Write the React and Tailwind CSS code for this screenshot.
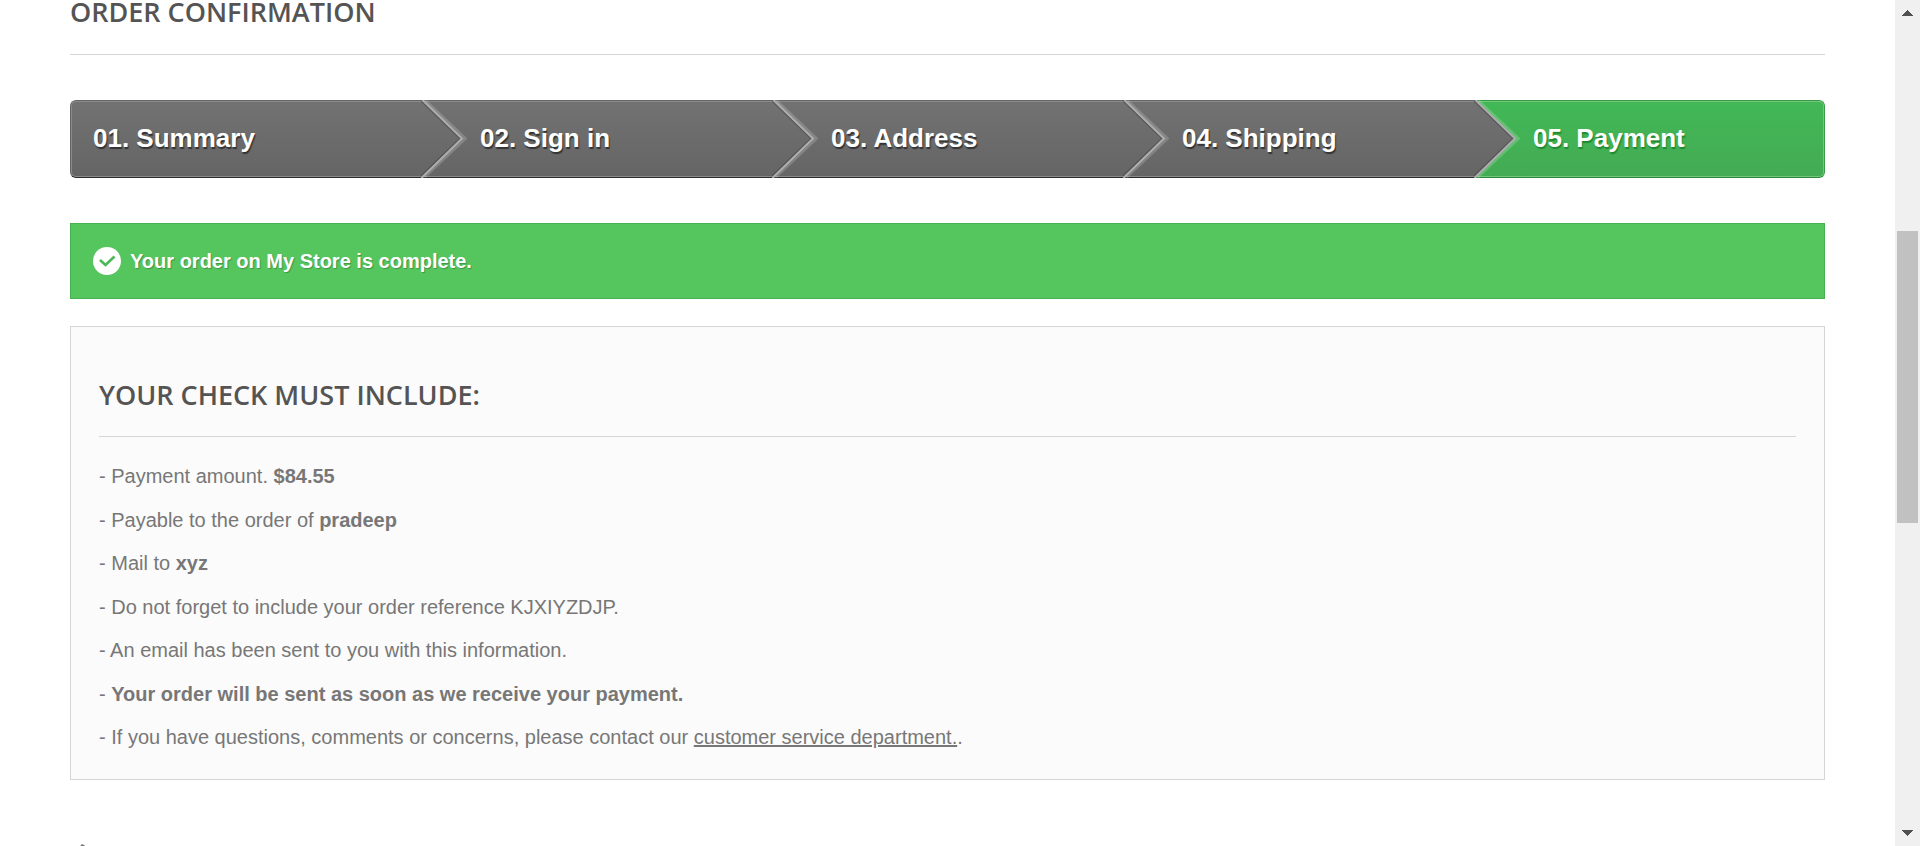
const STEPS = ["01. Summary", "02. Sign in", "03. Address", "04. Shipping", "05. Payment"];

function Chevron({ current }) {
  return (
    <svg aria-hidden="true" viewBox="0 0 46 78" className="absolute top-0 left-0 h-[78px] w-[46px]" fill="none">
      {current && (
        <>
          <defs>
            <linearGradient id="stepGrey" x1="0" y1="0" x2="0" y2="1">
              <stop offset="0" stopColor="#727272" />
              <stop offset="1" stopColor="#656565" />
            </linearGradient>
          </defs>
          <path d="M0 0H2L41 38.5L0 78Z" fill="url(#stepGrey)" />
        </>
      )}
      <path d="M4 1L43.500 38.500L3 77" stroke="#fff" strokeOpacity=".18" strokeWidth="4" />
      <path d="M-1 0L39 38.500L-1 77" stroke="#000" strokeOpacity=".2" strokeWidth="1.5" />
      <path d="M1.500 0L41 38.500L0.500 78" stroke="#adadad" strokeWidth="2" />
    </svg>
  );
}

function Step({ label, index }) {
  const first = index === 0;
  const current = index === STEPS.length - 1;
  return (
    <li
      aria-current={current ? "step" : undefined}
      className={
        "relative flex h-[78px] items-center border-y bg-linear-to-b pb-[2px] " +
        (first ? "rounded-l-md border-l pl-[22px] " : "pl-[59px] ") +
        (current
          ? "rounded-r-md border-r border-[#399b49] border-b-[#2c8540] from-[#42b856] to-[#43ab54]"
          : "border-[#666666] border-b-[#2b2b2b] from-[#727272] to-[#656565]")
      }
    >
      <span
        className={
          "pointer-events-none absolute inset-0 border-y " +
          (first ? "rounded-l-[5px] border-l " : "") +
          (current ? "rounded-r-[5px] border-r border-[#74c776]" : "border-[#8a8a8a]")
        }
      />
      {!first && (
        <span className="absolute -inset-y-px left-0">
          <Chevron current={current} />
        </span>
      )}
      <span
        className={
          "relative text-[26px] leading-8 font-bold text-white " +
          (current ? "[text-shadow:1px_2px_1px_#208931]" : "[text-shadow:1px_2px_1px_#333]")
        }
      >
        {label}
      </span>
    </li>
  );
}

function Heading({ as: Tag, children, className }) {
  return (
    <Tag className={"border-b border-[#d6d4d4] font-['Open_Sans',sans-serif] text-[27px] leading-6 font-semibold text-[#555454] uppercase " + className}>
      {children}
    </Tag>
  );
}

export default function App() {
  return (
    <div className="flex h-screen overflow-hidden bg-white font-['Liberation_Sans',Arial,sans-serif] text-[20px] leading-7 text-[#777777]">
      <main className="min-w-0 flex-1 overflow-hidden px-[70px]">
        <Heading as="h1" className="pb-[30px]">Order confirmation</Heading>

        <ol className="mt-[45px] grid grid-cols-5">
          {STEPS.map((label, i) => (
            <Step key={label} label={label} index={i} />
          ))}
        </ol>

        <p
          role="status"
          className="mt-[45px] flex h-[76px] items-center gap-[9px] border border-[#48b151] bg-[#55c65e] pl-[22px] font-bold text-white [text-shadow:1px_1px_1px_rgba(0,0,0,0.25)]"
        >
          <svg aria-hidden="true" viewBox="0 0 28 28" className="size-7">
            <circle cx="14" cy="14" r="14" fill="#fff" />
            <path d="M7 13L12.500 18L21.500 9.500" fill="none" stroke="#4db956" strokeWidth="2.600" />
          </svg>
          Your order on My Store is complete.
        </p>

        <section className="mt-[27px] border border-[#d6d4d4] bg-[#fbfbfb] px-7 pt-[56px] pb-[28px]">
          <Heading as="h2" className="pb-[29px]">Your check must include:</Heading>
          <ul className="mt-[25px] flex h-[289px] flex-col justify-between">
            <li>- Payment amount. <strong>$84.55</strong></li>
            <li>- Payable to the order of <strong>pradeep</strong></li>
            <li>- Mail to <strong>xyz</strong></li>
            <li>- Do not forget to include your order reference KJXIYZDJP.</li>
            <li>- An email has been sent to you with this information.</li>
            <li>- <strong>Your order will be sent as soon as we receive your payment.</strong></li>
            <li>
              - If you have questions, comments or concerns, please contact our{" "}
              <a href="#contact" className="underline">customer service department.</a>.
            </li>
          </ul>
        </section>

        <a href="#orders" aria-label="Back to orders" className="mt-16 ml-[5px] block w-3">
          <svg aria-hidden="true" viewBox="0 0 12 16" className="h-4 w-3">
            <path d="M7 0L10 1.500L4 8L10 14.500L7 16L0 8Z" fill="#777777" />
          </svg>
        </a>
      </main>

      <aside aria-hidden="true" className="flex w-[25px] shrink-0 flex-col items-center bg-[#f0f0f0] py-[10px]">
        <svg viewBox="0 0 11 6" className="h-[6px] w-[11px]" shapeRendering="crispEdges">
          <path d="M5.500 0L11 6H0Z" fill="#505050" />
        </svg>
        <div className="flex w-full flex-1 flex-col items-center">
          <div className="grow-[215]" />
          <div className="w-[21px] grow-[292] bg-[#c1c1c1]" />
          <div className="grow-[307]" />
        </div>
        <svg viewBox="0 0 11 6" className="h-[6px] w-[11px]" shapeRendering="crispEdges">
          <path d="M5.500 6L11 0H0Z" fill="#505050" />
        </svg>
      </aside>
    </div>
  );
}
